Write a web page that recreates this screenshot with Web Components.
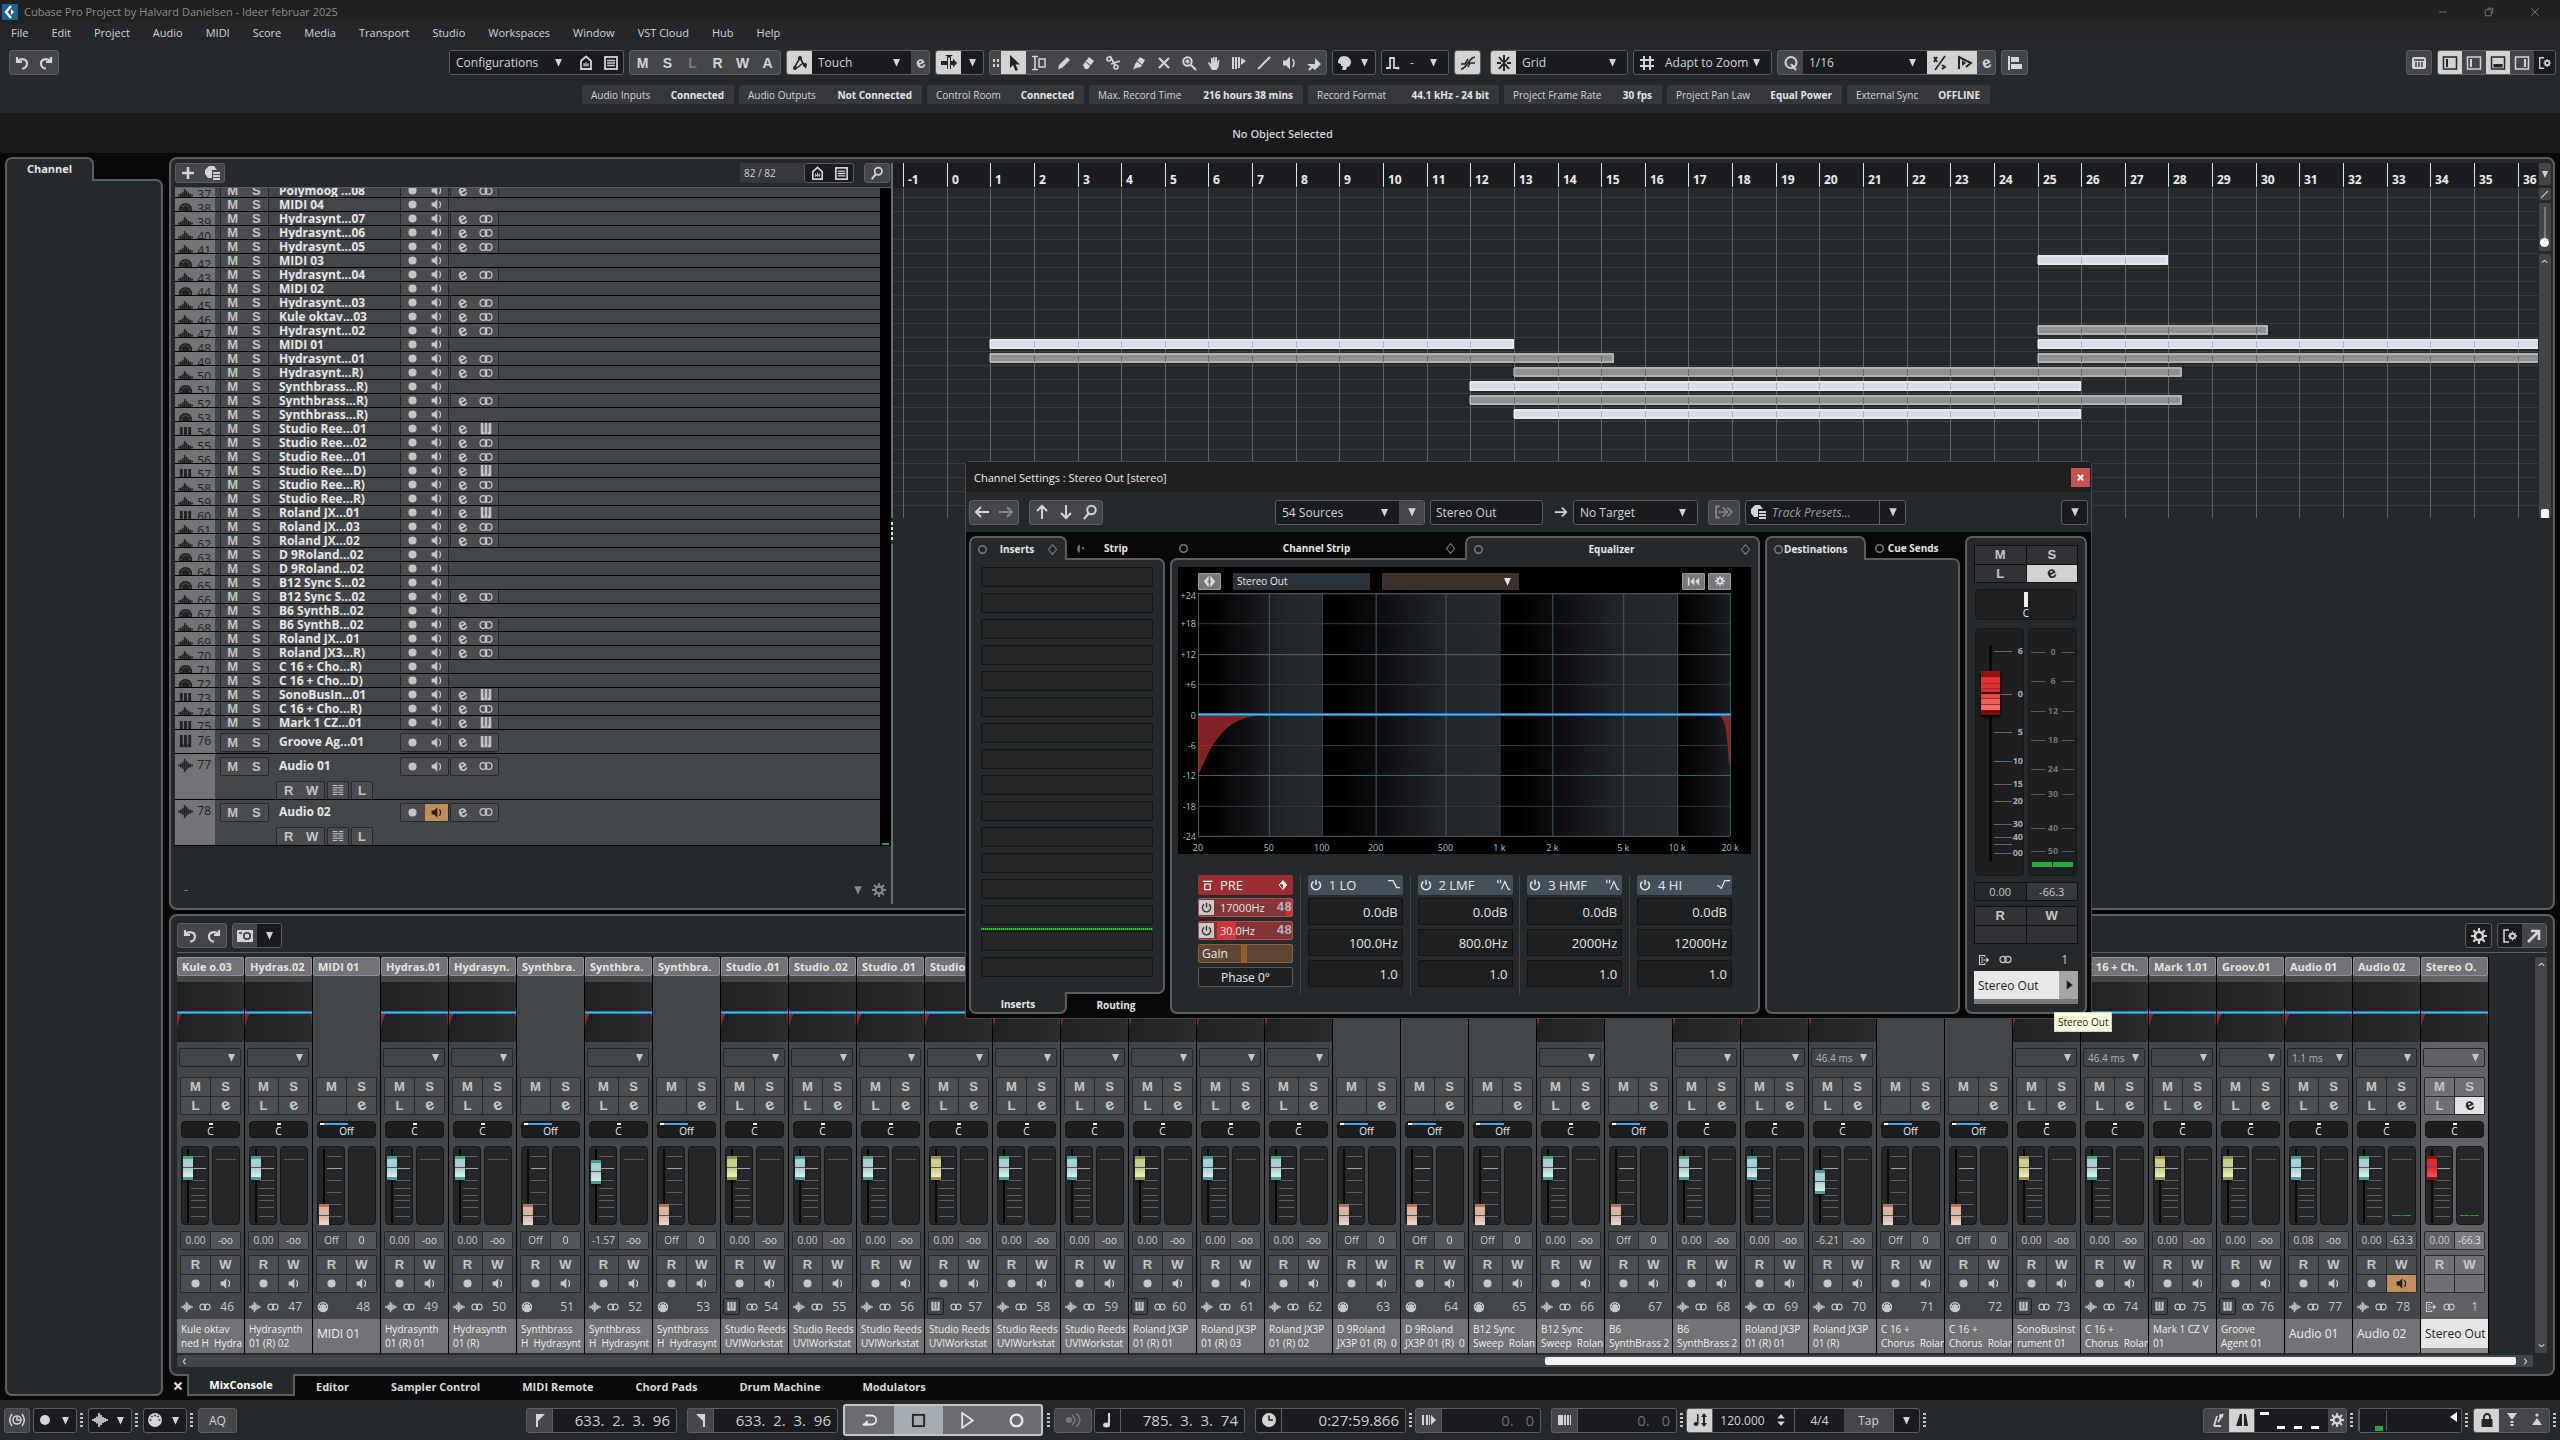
<!DOCTYPE html>
<html lang="en">
<head>
<meta charset="utf-8">
<title>Cubase Pro Project</title>
<style>
  html, body { margin: 0; height: 100%; background: #080808; }
  body { font-family: "Open Sans", "Noto Sans", sans-serif; color: #d2d3d5; overflow: hidden; }
</style>
</head>
<body>
<daw-app></daw-app>

<script>
// ---------- icons, all on a 16 x 16 grid ----------
const S = 'fill="none" stroke="currentColor"';
const ICONS = {
  logo: `<rect width="16" height="16" fill="#17628f"/><path d="M9 2 4 8l5 6" fill="none" stroke="#fff" stroke-width="2.4"/><path d="M9 5l3 3-3 3z" fill="#fff"/>`,
  undo: `<path d="M3 2v5h5M3.500 6.500C6 3 13 3.500 13 8.500c0 3-2.500 5-5 5" ${S} stroke-width="2.200"/>`,
  redo: `<path d="M13 2v5H8M12.500 6.500C10 3 3 3.500 3 8.500c0 3 2.500 5 5 5" ${S} stroke-width="2.200"/>`,
  agent: `<path d="M3 14V6l5-4.500L13 6v8z" ${S} stroke-width="1.800"/><path d="M6 11.500V8M8 11.500V7M10 11.500V8M6 10h4" ${S} stroke-width="1"/>`,
  list: `<rect x="2" y="2" width="12" height="12" ${S} stroke-width="1.800"/><path d="M4 5.500h8M4 8h8M4 10.500h8" ${S} stroke-width="1.400"/>`,
  auto: `<path d="M2 13 8 3l6 10M5 13l6-5" ${S} stroke-width="1.500"/><circle cx="8" cy="3" r="2"/><circle cx="3" cy="13" r="2"/><circle cx="13" cy="10" r="2"/>`,
  autoscroll: `<path d="M0 6h6V2h1v12H6v-4H0zM9 2h1v4h2V3.500L16 8l-4 4.500V10h-2v4H9z"/><path d="M4 0h8L8 3z"/>`,
  dots: `<rect x="5" y="4" width="2" height="3"/><rect x="5" y="9" width="2" height="3"/><rect x="9" y="4" width="2" height="3"/><rect x="9" y="9" width="2" height="3"/>`,
  cursor: `<path d="M4 0v13l3-3 2.500 6 2.500-1-2.500-5.500H14z"/>`,
  range: `<path d="M1 1.500h6M4 1.500v13M1 14.500h6" ${S} stroke-width="1.600"/><rect x="8" y="4" width="6" height="8" ${S} stroke-width="1.500"/>`,
  pencil: `<path d="M2 14l1-4 8-8 3 3-8 8z"/>`,
  eraser: `<path d="M2 10l6-8 5 4-6 8H4z"/><path d="M5 7l5 4" stroke="#37393c"/>`,
  scissors: `<path d="M4 1l5 9M14 6l-9 3" ${S} stroke-width="1.800"/><circle cx="10" cy="12" r="2" ${S} stroke-width="1.600"/><circle cx="3" cy="4" r="2" ${S} stroke-width="1.600"/>`,
  glue: `<path d="M2 15l2-6 5-7 5 3-4 7-5 1z"/><path d="M6 6l5 4" stroke="#37393c"/>`,
  cross: `<path d="M3 3l10 10M13 3L3 13" ${S} stroke-width="2.200"/>`,
  zoom: `<circle cx="6.500" cy="6.500" r="4.200" ${S} stroke-width="2"/><path d="M10 10l5 5M4.500 6.500h4M6.500 4.500v4" ${S} stroke-width="2"/>`,
  search: `<circle cx="9.500" cy="6" r="4.200" ${S} stroke-width="2"/><path d="M6.500 9.500L2 15" ${S} stroke-width="2.200"/>`,
  hand: `<path d="M3 7l2 2V3h1.500v4L7 2h1.500v5L9.500 2H11v6l1-3h1.500l-1 7-2 3H6L2 8z"/>`,
  comp: `<path d="M1 2h2v12H1zM4 2h2v12H4zM7 2h2v11H7zM10 3l5 3-5 4z"/>`,
  line: `<path d="M2 14L14 2" ${S} stroke-width="2"/>`,
  speaker: `<path d="M2 5.500h3l4-4v13l-4-4H2z"/><path d="M11.500 4c2 2 2 6 0 8" ${S} stroke-width="1.500"/>`,
  jog: `<circle cx="4" cy="8" r="3"/><path d="M7 3c4 3 4 7 0 10M11 1c5 4 5 10 0 14" ${S} stroke-width="1.600"/>`,
  warp: `<path d="M1 9h8V3l6 6-6 6"/><path d="M3 15l5-5" ${S} stroke-width="2"/>`,
  head: `<path d="M8 1c4 0 7 3 7 6s-2 5-4 5l-1 3H6l1-4H5V9L2 8c0-4 2-7 6-7z"/>`,
  nudge: `<path d="M1 13h4V3h4v10h4" ${S} stroke-width="1.800"/><circle cx="13" cy="13" r="1.500"/>`,
  xfade: `<path d="M1 14c6 0 8-12 14-12M1 9h4l3-5M8 12l2-4h5" ${S} stroke-width="1.600"/>`,
  snap: `<path d="M8 0v16M1 8h4M11 8h4M3 2l4 5M13 2L9 7M3 14l4-5M13 14L9 9" ${S} stroke-width="2"/>`,
  grid: `<path d="M5 1v14M11 1v14M1 5h14M1 11h14" ${S} stroke-width="2"/>`,
  quant: `<circle cx="8" cy="7.500" r="5.500" ${S} stroke-width="2"/><path d="M8 9l5 6" ${S} stroke-width="2"/>`,
  ratio: `<path d="M13 1L3 15" ${S} stroke-width="1.600"/><path d="M2 2l3 5M5 2L2 7M10 10l3 2-3 2" ${S} stroke-width="1.800"/>`,
  qflag: `<path d="M2 14V2l12 6-5 4" ${S} stroke-width="2"/><path d="M5 5l4 3-4 3z"/>`,
  align: `<path d="M1 1h2v14H1zM4 2h8v5H4zM4 9h11v5H4z"/>`,
  keys: `<path d="M2 1h3v10h1v3H2zM6.500 1h3v13h-3zM11 1h3v13h-4v-3h1z"/>`,
  rack: `<rect x="1" y="2" width="14" height="12" rx="2"/><path d="M3 5h10M5 7v5M8 7v5M11 7v5" stroke="#35373a" stroke-width="1.400"/>`,
  zoneL: `<rect x="1.500" y="2" width="13" height="12" ${S} stroke-width="1.500"/><path d="M4 4h2v8H4z"/>`,
  zoneB: `<rect x="1.500" y="2" width="13" height="12" ${S} stroke-width="1.500"/><path d="M3.500 9h9v3.500h-9z"/>`,
  zoneR: `<rect x="1.500" y="2" width="13" height="12" ${S} stroke-width="1.500"/><path d="M10 4h2v8h-2z"/>`,
  gear: `<circle cx="8" cy="8" r="4" ${S} stroke-width="2.600"/><path d="M8 0v4M8 12v4M0 8h4M12 8h4M2.300 2.300l2.900 2.900M10.800 10.800l2.900 2.900M2.300 13.700l2.900-2.900M10.800 5.200l2.900-2.900" ${S} stroke-width="2.200"/>`,
  zoneGear: `<path d="M7 2H2v12h5" ${S} stroke-width="1.500"/><circle cx="10.500" cy="8" r="2.400" ${S} stroke-width="1.800"/><path d="M10.500 3.500v2M10.500 10.500v2M6 8h2M13 8h2M7.500 5l1 1M12.500 10l1 1M7.500 11l1-1M12.500 6l1-1" ${S} stroke-width="1.400"/>`,
  plus: `<path d="M8 2v12M2 8h12" ${S} stroke-width="2.600"/>`,
  preset: `<path d="M5 1h5l3 4H8v8H4L1 9V5z"/><path d="M9 8h7M9 11h7M9 14h7" ${S} stroke-width="2"/>`,
  dot: `<circle cx="8" cy="8" r="5"/>`,
  ring: `<circle cx="8" cy="8" r="5.500" ${S} stroke-width="2.200"/>`,
  stereo: `<circle cx="5" cy="8" r="3.800" ${S} stroke-width="1.500"/><circle cx="11" cy="8" r="3.800" ${S} stroke-width="1.500"/>`,
  wave: `<path d="M1 7v2M3 6v4M5 4.500v7M7 1v14M9 3v10M11 5v6M13 6v4M15 7v2" ${S} stroke-width="1.700"/>`,
  midi: `<circle cx="8" cy="8" r="7"/><g fill="#4a4c4f"><circle cx="3.500" cy="8" r="1.100"/><circle cx="5" cy="4.500" r="1.100"/><circle cx="8" cy="3.500" r="1.100"/><circle cx="11" cy="4.500" r="1.100"/><circle cx="12.500" cy="8" r="1.100"/></g>`,
  lanes: `<path d="M1 2h6M9 2h6M1 5h14M1 8h6M9 8h6M1 11h14M1 14h6M9 14h6" ${S} stroke-width="1.500"/>`,
  left: `<path d="M15 8H2M7 3L2 8l5 5" ${S} stroke-width="2"/>`,
  right: `<path d="M1 8h13M9 3l5 5-5 5" ${S} stroke-width="2"/>`,
  up: `<path d="M8 15V2M3 7l5-5 5 5" ${S} stroke-width="2"/>`,
  down: `<path d="M8 1v13M3 9l5 5 5-5" ${S} stroke-width="2"/>`,
  goto: `<path d="M4 3H1v10h3M3 8h8M7 4l4 4-4 4M11 4l4 4-4 4" ${S} stroke-width="1.500"/>`,
  out: `<path d="M9 4V2H2v12h7v-2M4 5h3M4 8h8M4 11h3" ${S} stroke-width="1.500"/><path d="M11 4l4 4-4 4z"/>`,
  diamond: `<path d="M8 2l5 6-5 6-5-6z" ${S} stroke-width="1.300"/>`,
  diamondHalf: `<path d="M8 2l5 6-5 6-5-6z" ${S} stroke-width="1.300"/><path d="M8 2l5 6-5 6V8L5 6z"/>`,
  eqlink: `<path d="M7 1v5l-2 2 2 2v5L1 8zM9 1l6 7-6 7V9l2-1-2-1z"/>`,
  rewind: `<path d="M1 3h2v10H1zM9 3v10L4 8zM15 3v10l-5-5z"/>`,
  power: `<path d="M8 1v7M4.500 3.500a6 6 0 1 0 7 0" ${S} stroke-width="2"/>`,
  bypass: `<path d="M1 2h14" ${S} stroke-width="2"/><rect x="4" y="6" width="8" height="8" ${S} stroke-width="1.800"/>`,
  lo: `<path d="M1 3h6l4 8h4" ${S} stroke-width="1.400"/>`,
  mid: `<path d="M1 2v4M4 2v4M5 13l4-9 4 9h2" ${S} stroke-width="1.400"/>`,
  hi: `<path d="M1 9h2l3 3 4-9h6" ${S} stroke-width="1.400"/>`,
  camera: `<rect y="2" width="16" height="12" rx="1"/><circle cx="10" cy="8" r="3.200" fill="none" stroke="#35373a" stroke-width="1.600"/><path d="M2 5h3" stroke="#35373a" stroke-width="1.600"/>`,
  pop: `<path d="M2 14L13 3M5 3h8v9" ${S} stroke-width="2.600"/>`,
  clock: `<circle cx="8" cy="8" r="7"/><path d="M8 3.500V8h4" fill="none" stroke="#1b1c20" stroke-width="1.500"/>`,
  sync: `<circle cx="8" cy="8" r="4" ${S} stroke-width="1.600"/><path d="M8 5v3h3M3 2c-3 4-3 8 0 12M13 2c3 4 3 8 0 12" ${S} stroke-width="1.500"/>`,
  locL: `<path d="M4 2h9L6 9v6H4z"/>`,
  locR: `<path d="M12 2H3l7 7v6h2z"/>`,
  cycle: `<path d="M4 4h5c6 0 6 8 0 8H2" ${S} stroke-width="1.600"/><path d="M1 12.500L6 8v5z"/>`,
  stop: `<rect x="2" y="2" width="12" height="12" ${S} stroke-width="2"/>`,
  play: `<path d="M3 1l10 7-10 7z" ${S} stroke-width="1.600"/>`,
  pre: `<path d="M1 3h2v10H1zM5 3h2v10H5zM8 3h1v10H8zM10 3l5 5-5 5z"/>`,
  punch: `<path d="M1 3h5v10H1zM7 3h2v10H7zM10 3h2v10h-2zM13 3h1v10h-1z"/>`,
  note: `<path d="M8 1h2v11H8z"/><ellipse cx="6.500" cy="13" rx="3.500" ry="2.500"/>`,
  tempo: `<path d="M5 2h1.500v10H5z"/><ellipse cx="4" cy="12" rx="2.500" ry="2"/><path d="M9 5l3-4 3 4h-2v6h2l-3 4-3-4h2V5z"/>`,
  metro: `<path d="M5 14h7M5 14L8 4M9 10l5-8" ${S} stroke-width="1.800"/><circle cx="12" cy="4" r="2"/>`,
  count: `<path d="M2 14L6 2h2v12zM10 2h2l2 12h-4z"/>`,
  lock: `<rect x="2.500" y="7" width="11" height="8"/><path d="M5 8V5a3 3 0 0 1 6 0v3" ${S} stroke-width="1.800"/>`,
  punchIn: `<path d="M3 1h10L8 8z"/><path d="M8 9v6" ${S} stroke-width="3" stroke-dasharray="2 1"/>`,
  punchOut: `<path d="M3 13h10L8 6z"/><circle cx="8" cy="3" r="1.600"/>`,
  min: `<path d="M3 8h10" ${S}/>`, max: `<rect x="3" y="5" width="8" height="8" rx="1" ${S}/><path d="M6 3h7v7" ${S}/>`,
  close: `<path d="M3 3l10 10M13 3L3 13" ${S}/>`,
  xs: `<path d="M4 4l8 8M12 4l-8 8" ${S} stroke-width="2.600"/>`,
  chevL: `<path d="M10 3L6 8l4 5" ${S} stroke-width="2"/>`, chevR: `<path d="M6 3l4 5-4 5" ${S} stroke-width="2"/>`,
  chevU: `<path d="M3 10l5-4 5 4" ${S} stroke-width="2"/>`, chevD: `<path d="M3 6l5 4 5-4" ${S} stroke-width="2"/>`,
  tri: `<path d="M3 3h10L8 14z"/>`, triR: `<path d="M5 2l8 6-8 6z"/>`,
  half: `<path d="M7 2v12C2 13 2 3 7 2zM10 6h3v3h-3z"/>`,
  updown: `<path d="M3 6l5-6 5 6zM3 10l5 6 5-6z"/>`
};

customElements.define('ui-icon', class extends HTMLElement {
  connectedCallback() {
    if (this.shadowRoot) return;
    const s = this.getAttribute('size') || 16;
    this.attachShadow({mode: 'open'}).innerHTML = `
      <style>:host{display:inline-flex;flex:none} svg{display:block;fill:currentColor}</style>
      <svg width="${s}" height="${s}" viewBox="0 0 16 16" aria-hidden="true">${ICONS[this.getAttribute('name')] || ''}</svg>`;
  }
});

const ic = (name, size = 16) => `<ui-icon name="${name}" size="${size}"></ui-icon>`;
const EE = '<span class="e">e</span>';
const b = (inner, cls = '', label = '') => `<button class="${cls}"${label ? ` aria-label="${label}"` : ''}>${inner}</button>`;
const ib = (name, cls = '') => b(ic(name), cls, name);
const sel = (text, w, cls = '') => `<span class="sel ${cls}" style="width:${w}px"><select aria-label="${text || 'choose'}"><option>${text}</option></select>${ic('tri', 11)}</span>`;

const BASE = `
  * { box-sizing: border-box; }
  button, select, input { font: inherit; color: inherit; margin: 0; padding: 0; border: 0; background: none; border-radius: 0; outline: 0; }
  button { display: inline-flex; align-items: center; justify-content: center; }
  select { appearance: none; width: 100%; height: 100%; padding: 0 16px 0 6px; }
  .e { font: bold 16px/16px "Liberation Sans", sans-serif; transform: rotate(-22deg); }
  .g { display: flex; align-items: stretch; height: 25px; flex: none; border: 1px solid #5a5c5f; border-radius: 3px; background: #45464a; overflow: hidden; font-size: 12px; color: #d4d4d4; }
  .g.dk, .dk { background: #1a1b1f; }
  .g button { width: 25px; flex: none; }
  .g.n button { width: 24px; }
  .g .on { background: #d2d2d2; color: #222427; }
  .g .off { color: #75777b; }
  .ltr { font-family: "Liberation Sans", sans-serif; font-weight: bold; font-size: 14px; }
  .sel { display: flex; align-items: center; background: #1a1b1f; padding-right: 6px; }
  .sel ui-icon { margin-left: -14px; pointer-events: none; }
  .grip { flex: none; width: 3px; height: 15px; margin: 0 2px; background: repeating-linear-gradient(#c5c5c5 0 2px, transparent 2px 4px); align-self: center; }
  .sp { flex: 1; }
`;

class DawElement extends HTMLElement {
  connectedCallback() {
    if (this.shadowRoot) return;
    this.attachShadow({mode: 'open'}).innerHTML = `<style>${BASE}${this.css()}</style>${this.html()}`;
  }
  css() { return ':host{display:block}'; }
  html() { return '<slot></slot>'; }
}

// ---------- title, menu ----------
customElements.define('title-bar', class extends DawElement {
  css() { return `
    :host { display: flex; align-items: center; height: 23px; padding: 0 2px; background: #202020; color: #8e8e8e; font-size: 11px; }
    ui-icon { margin-right: 6px; }
    button ui-icon { margin: 0; }
    button { width: 46px; height: 23px; }`; }
  html() { return `${ic('logo')}<span>Cubase Pro Project by Halvard Danielsen - Ideer februar 2025</span><span class="sp"></span>
    ${b(ic('min', 12), '', 'minimize')}${b(ic('max', 12), '', 'restore')}${b(ic('close', 12), '', 'close')}`; }
});

customElements.define('menu-bar', class extends DawElement {
  css() { return `
    :host { display: flex; align-items: center; gap: 23px; height: 19px; padding: 0 11px; background: #24262b; font-size: 11px; }`; }
  html() {
    return 'File,Edit,Project,Audio,MIDI,Score,Media,Transport,Studio,Workspaces,Window,VST Cloud,Hub,Help'
      .split(',').map(t => b(t)).join('');
  }
});

customElements.define('tool-bar', class extends DawElement {
  css() { return `
    :host { display: flex; align-items: center; gap: 5px; height: 40px; padding: 6px 4px 5px 9px; background: #24292c; }
    .cfg { margin-left: 385px; }
    .g .ed { width: 18px; }
    .g .dd { width: 22px; }
    .g.col button { width: 21px; }
    .g.tools .first { width: 11px; }
    .g.zones .last { width: 21px; }`; }
  html() {
    const tools = ['range', 'pencil', 'eraser', 'scissors', 'glue', 'cross', 'zoom', 'hand', 'comp', 'line', 'speaker', 'warp'];
    return `
      <div class="g n">${ib('undo')}${ib('redo')}</div>
      <div class="g dk cfg">${sel('Configurations', 123)}${ib('agent')}${ib('list')}</div>
      <div class="g ltr">${'MS'.split('').map(t => b(t)).join('')}${b('L', 'off')}${'RWA'.split('').map(t => b(t)).join('')}</div>
      <div class="g">${ib('auto', 'on')}${sel('Touch', 99)}${b(EE, 'ed', 'edit')}</div>
      <div class="g dk">${ib('autoscroll', 'on')}${b(ic('tri', 11), 'dd', 'more')}</div>
      <div class="g tools">${b(ic('dots'), 'first', 'handle')}${ib('cursor', 'on')}${tools.map(t => ib(t)).join('')}</div>
      <div class="g dk col">${ib('head')}${b(ic('tri', 11), '', 'colours')}</div>
      <div class="g dk">${b(ic('nudge'), 'dd', 'nudge')}${sel('-', 44)}</div>
      <div class="g">${ib('xfade', 'on')}</div>
      <div class="g dk" style="margin-left:4px">${ib('snap', 'on')}${sel('Grid', 111)}</div>
      <div class="g dk">${ib('grid')}${sel('Adapt to Zoom', 112)}</div>
      <div class="g">${ib('quant')}${sel('1/16', 124)}${ib('ratio', 'on')}${ib('qflag', 'on')}${b(EE, 'ed', 'quantize panel')}</div>
      <div class="g">${ib('align')}</div>
      <span class="sp"></span>
      <div class="g n">${ib('rack')}</div>
      <div class="g n zones">${ib('zoneL', 'on')}${ib('zoneL')}${ib('zoneB', 'on')}${ib('zoneR')}${b(ic('zoneGear', 14), 'dk last', 'zone setup')}</div>`;
  }
});

customElements.define('status-line', class extends DawElement {
  css() { return `
    :host { display: flex; justify-content: center; gap: 5px; height: 31px; padding: 3px 0 9px 12px; background: #24292c; font-size: 10px; }
    div { display: flex; align-items: center; justify-content: space-between; padding: 0 10px 0 9px; background: #37383c; border-radius: 2px; }
    b { color: #e4e4e4; }`; }
  html() {
    return [['Audio Inputs', 'Connected', 152], ['Audio Outputs', 'Not Connected', 183], ['Control Room', 'Connected', 157],
      ['Max. Record Time', '216 hours 38 mins', 214], ['Record Format', '44.1 kHz - 24 bit', 191], ['Project Frame Rate', '30 fps', 158],
      ['Project Pan Law', 'Equal Power', 175], ['External Sync', 'OFFLINE', 143]]
      .map(([k, v, w]) => `<div style="width:${w}px"><span>${k}</span><b>${v}</b></div>`).join('');
  }
});

customElements.define('info-line', class extends DawElement {
  css() { return `:host { display: flex; justify-content: center; align-items: center; height: 40px; padding-left: 5px; background: #191a1c; font-size: 11px; font-weight: 600; }`; }
});

// ---------- frame with tabs on top and, if asked for, below ----------
customElements.define('tab-frame', class extends DawElement {
  css() { return `
    :host { display: flex; flex-direction: column; min-width: 0; min-height: 0; font-size: 10px; font-weight: bold; color: #e6e6e6; }
    .tabs { display: flex; height: 22px; flex: none; }
    .tab { flex: 1; display: flex; align-items: center; justify-content: space-between; padding: 2px 8px 0; }
    :host([single]) .tab { flex: 0 0 89px; justify-content: center; font-size: 11px; }
    .tab ui-icon { color: #77797c; }
    .tab .pad { width: 11px; }
    .tab.on { position: relative; z-index: 1; background: #24292c; border: 2px solid #5b5d61; padding: 0 6px; }
    :host([single]) .tab.on { padding-bottom: 3px; }
    .top .on { border-bottom: 0; border-radius: 7px 7px 0 0; margin-bottom: -2px; }
    .bot { height: 20px; }
    .bot .tab { justify-content: center; }
    .bot .on { border-top: 0; border-radius: 0 0 7px 7px; margin-top: -2px; padding-top: 3px; }
    .body { flex: 1; min-height: 0; border: 2px solid #5b5d61; border-radius: 7px; background: #24292c; font-weight: normal; }
    .a0 { border-top-left-radius: 0; }
    .a1 { border-top-right-radius: 0; }
    .b0 { border-bottom-left-radius: 0; }`; }
  html() {
    const active = +(this.getAttribute('active') || 0);
    const icons = (this.getAttribute('icons') || '').split(',');
    const tab = (t, i, on) => {
      const [l, r] = (icons[i] || '').split(' ');
      return `<button class="tab ${on ? 'on' : ''}">${l ? ic(l, 11) : ''}<span>${t}</span>${r ? ic(r, 13) : l ? '<span class="pad"></span>' : ''}</button>`;
    };
    const bot = this.getAttribute('bottom');
    return `<div class="tabs top">${this.getAttribute('tabs').split(',').map((t, i) => tab(t, i, i === active)).join('')}</div>
      <div class="body a${active} ${bot ? 'b0' : ''}"><slot></slot></div>
      ${bot ? `<div class="tabs bot">${bot.split(',').map((t, i) => `<button class="tab ${i ? '' : 'on'}">${t}</button>`).join('')}</div>` : ''}`;
  }
});

// ---------- track list ----------
// number, kind (a audio, m midi, i instrument), name
const TRACKS = [[37, 'a', 'Polymoog ...08'], [38, 'm', 'MIDI 04'], [39, 'a', 'Hydrasynt...07'], [40, 'a', 'Hydrasynt...06'], [41, 'a', 'Hydrasynt...05'],
  [42, 'm', 'MIDI 03'], [43, 'a', 'Hydrasynt...04'], [44, 'm', 'MIDI 02'], [45, 'a', 'Hydrasynt...03'], [46, 'a', 'Kule oktav...03'],
  [47, 'a', 'Hydrasynt...02'], [48, 'm', 'MIDI 01'], [49, 'a', 'Hydrasynt...01'], [50, 'a', 'Hydrasynt...R)'], [51, 'm', 'Synthbrass...R)'],
  [52, 'a', 'Synthbrass...R)'], [53, 'm', 'Synthbrass...R)'], [54, 'i', 'Studio Ree...01'], [55, 'a', 'Studio Ree...02'], [56, 'a', 'Studio Ree...01'],
  [57, 'i', 'Studio Ree...D)'], [58, 'a', 'Studio Ree...R)'], [59, 'a', 'Studio Ree...R)'], [60, 'i', 'Roland JX...01'], [61, 'a', 'Roland JX...03'],
  [62, 'a', 'Roland JX...02'], [63, 'm', 'D 9Roland...02'], [64, 'm', 'D 9Roland...02'], [65, 'm', 'B12 Sync S...02'], [66, 'a', 'B12 Sync S...02'],
  [67, 'm', 'B6 SynthB...02'], [68, 'a', 'B6 SynthB...02'], [69, 'a', 'Roland JX...01'], [70, 'a', 'Roland JX3...R)'], [71, 'm', 'C 16 + Cho...R)'],
  [72, 'm', 'C 16 + Cho...D)'], [73, 'i', 'SonoBusIn...01'], [74, 'a', 'C 16 + Cho...R)'], [75, 'i', 'Mark 1 CZ...01'], [76, 'i', 'Groove Ag...01', 'mid'],
  [77, 'a', 'Audio 01', 'tall'], [78, 'a', 'Audio 02', 'tall', 'mon']];
const KIND = {a: 'wave', m: 'midi', i: 'keys'};

customElements.define('track-row', class extends DawElement {
  css() { return `
    :host { display: flex; height: 14px; border-bottom: 1px solid #000; background: #434649; overflow: hidden; }
    :host([size=mid]) { height: 24px; }
    :host([size=tall]) { height: 46px; }
    .num { width: 40px; height: 100%; flex: none; background: #727376; color: #222; font-size: 12px; line-height: 22px; display: flex; align-items: flex-start; padding: 0 4px 0 3px; justify-content: space-between; }
    .num ui-icon { margin-top: 4px; }
    .main { padding-left: 5px; }
    .line { display: flex; height: 13px; align-items: center; }
    :host([size]) .line { height: 24px; }
    .c { display: flex; width: 49px; height: 100%; border: solid #26282b; border-width: 0 1px; background: #4a4c50; color: #c4c4c4; }
    :host([size]) .c { height: 19px; border-width: 1px; border-radius: 2px; }
    .c button { flex: 1; }
    .c .mon { background: #bf8f5d; color: #222; }
    .name { width: 131px; padding-left: 10px; font: bold 12px/16px "Open Sans", "Noto Sans", sans-serif; color: #e6e6e6; white-space: nowrap; }
    .c + .c { margin-left: 1px; }
    .ltr { font-size: 13px; }
    .line.sub { padding-left: 56px; height: 17px; gap: 2px; }
    .sub .c { height: 19px; margin: 0; }
    .sub .s { width: 22px; }`; }
  html() {
    const [n, kind, name, size, mon] = TRACKS[this.getAttribute('index')];
    return `<div class="num">${ic(KIND[kind], 15)}<span>${n}</span></div>
      <div class="main"><div class="line">
        <div class="c ltr">${b('M')}${b('S')}</div><span class="name">${name}</span>
        <div class="c">${b(ic('dot', 13), '', 'record')}${b(ic('speaker', 13), mon ? 'mon' : '', 'monitor')}</div>
        ${kind === 'm' ? '' : `<div class="c">${b(EE, '', 'edit')}${b(ic(kind === 'i' ? 'keys' : 'stereo', 14), '', 'channel')}</div>`}
      </div>
      ${size === 'tall' ? `<div class="line sub"><div class="c ltr">${b('R')}${b('W')}</div><div class="c s">${b(ic('lanes', 12), '', 'lanes')}</div><div class="c s ltr">${b('L')}</div></div>` : ''}</div>`;
  }
});

customElements.define('track-list', class extends DawElement {
  css() { return `
    :host { display: flex; flex-direction: column; }
    header { display: flex; height: 25px; flex: none; align-items: flex-start; border-bottom: 1px solid #5b5d61; }
    .g { height: 20px; }
    .count { width: 64px; height: 20px; padding-left: 4px; background: #37383c; font-size: 10px; line-height: 20px; }
    .find { margin: 0 1px 0 10px; }
    .rows { overflow: hidden; border-right: 11px solid #000; }
    .rows track-row:first-child { margin-top: -4px; }
    .meter { height: 2px; width: 7px; margin: -3px 2px 0 auto; background: #2a9a40; }
    footer { display: flex; align-items: center; gap: 8px; padding: 0 5px 6px 9px; margin-top: auto; font-size: 12px; color: #85878a; }`; }
  html() {
    return `<header><div class="g n">${ib('plus')}${ib('preset')}</div><span class="sp"></span>
        <span class="count">82 / 82</span><div class="g n dk">${b(ic('agent', 15), '', 'agents')}${b(ic('list', 15), '', 'visibility')}</div><div class="g n find">${b(ic('search', 14), '', 'search')}</div></header>
      <div class="rows">${TRACKS.map((t, i) => `<track-row index="${i}"${t[3] ? ` size="${t[3]}"` : ''}></track-row>`).join('')}</div>
      <div class="meter"></div>
      <footer><span>-</span><span class="sp"></span>${ic('tri', 12)}${ic('gear', 14)}</footer>`;
  }
});

// ---------- arrangement: bar lines, lanes and parts ----------
// track, first bar, last bar, 1 = midi part
const PARTS = [[42, 25, 28, 1], [47, 25, 30.27], [48, 1, 13, 1], [48, 25, 40, 1], [49, 1, 15.3], [49, 25, 40],
  [50, 13, 28.3], [51, 12, 26, 1], [52, 12, 28.3], [53, 13, 26, 1]];
const barX = bar => Math.round(10 + (bar + 1) * 480 / 11);

customElements.define('arrange-view', class extends DawElement {
  css() { return `
    :host { display: grid; grid-template-columns: 1fr 13px; min-width: 0; }
    svg { display: block; width: 100%; }
    .ruler { height: 25px; background: #1b1c20; }
    .lanes { height: 330px; }
    text { font: bold 12px "Open Sans", "Noto Sans", sans-serif; fill: #eceded; }
    .side { display: flex; flex-direction: column; align-items: center; gap: 3px; }
    .side > * { width: 12px; background: #434549; border-radius: 2px; }
    .side .t { height: 22px; }
    .side .p { height: 12px; }
    .zoom { height: 48px; padding: 4px 0; display: flex; justify-content: center; }
    .zoom input { appearance: none; writing-mode: vertical-lr; width: 9px; height: 40px; background: linear-gradient(90deg, transparent 4px, #77797c 4px 6px, transparent 6px); }
    .zoom input::-webkit-slider-thumb { appearance: none; width: 9px; height: 9px; border-radius: 5px; background: #fff; }
    .bar { height: 264px; display: flex; flex-direction: column; justify-content: space-between; align-items: center; padding-top: 3px; }
    .bar i { width: 8px; height: 9px; background: #f4f4f4; border-radius: 2px 2px 0 0; }`; }
  html() {
    let ticks = '', bars = '', lanes = '', parts = '';
    for (let i = -1; i < 37; i++) {
      ticks += `<rect x="${barX(i)}" width="1" height="24" fill="#e4e4e4"/><text x="${barX(i) + 5}" y="21">${i}</text>`;
      bars += `<rect x="${barX(i)}" width="1" height="330" fill="#5f6265"/>`;
    }
    for (let y = 9; y < 330; y += 14) lanes += `<rect y="${y}" width="100%" height="1" fill="#383b3e"/>`;
    for (const [trk, from, to, midi] of PARTS) {
      const x = barX(from), y = 12 + (trk - 38) * 14, w = barX(to) - x;
      parts += `<rect x="${x}" y="${y - 1}" width="${w}" height="10" fill="${midi ? '#d8dde5' : '#8f9092'}"/>
        <path d="M${x} ${y}h${w - 1}v8h${1 - w}z" fill="none" stroke="${midi ? '#f4f5f7' : '#d4d4d4'}"/>`;
      for (let k = from + 1; k < to; k++) parts += `<rect x="${barX(k)}" y="${y + 1}" width="1" height="7" fill="${midi ? '#a9b8c4' : '#6c6d6f'}"/>`;
    }
    return `<div><svg class="ruler">${ticks}</svg><svg class="lanes">${lanes}${bars}${parts}</svg></div>
      <div class="side">${b(ic('tri', 10), 't', 'ruler setup')}${b(ic('line', 9), 'p', 'draw')}
        <div class="zoom"><input type="range" value="100" aria-label="Waveform zoom"></div>
        <div class="bar">${ic('chevU', 9)}<i></i></div></div>`;
  }
});

// ---------- mixer ----------
// label, number, kind, name lines, options
const SR = ['Studio Reeds', 'UVIWorkstat'], SY = ['Synthbrass', 'H&nbsp; Hydrasynt'];
const STRIPS = [['Kule o.03', 46, 'a', ['Kule oktav', 'ned H&nbsp; Hydra']], ['Hydras.02', 47, 'a', ['Hydrasynth', '01 (R) 02']], ['MIDI 01', 48, 'm', ['MIDI 01']],
  ['Hydras.01', 49, 'a', ['Hydrasynth', '01 (R) 01']], ['Hydrasyn.', 50, 'a', ['Hydrasynth', '01 (R)']], ['Synthbra.', 51, 'm', SY],
  ['Synthbra.', 52, 'a', SY, {v: '-1.57', f: 79}], ['Synthbra.', 53, 'm', SY], ['Studio .01', 54, 'i', SR], ['Studio .02', 55, 'a', SR],
  ['Studio .01', 56, 'a', SR], ['Studio .', 57, 'i', SR], ['', 58, 'a', SR], ['', 59, 'a', SR], ['', 60, 'i', ['Roland JX3P', '01 (R) 01']],
  ['', 61, 'a', ['Roland JX3P', '01 (R) 03']], ['', 62, 'a', ['Roland JX3P', '01 (R) 02']], ['', 63, 'm', ['D 9Roland', 'JX3P 01 (R)&nbsp; 0']],
  ['', 64, 'm', ['D 9Roland', 'JX3P 01 (R)&nbsp; 0']], ['', 65, 'm', ['B12 Sync', 'Sweep&nbsp; Rolan']], ['', 66, 'a', ['B12 Sync', 'Sweep&nbsp; Rolan']],
  ['', 67, 'm', ['B6', 'SynthBrass 2']], ['', 68, 'a', ['B6', 'SynthBrass 2']], ['', 69, 'a', ['Roland JX3P', '01 (R) 01']],
  ['', 70, 'a', ['Roland JX3P', '01 (R)'], {v: '-6.21', f: 61, ms: '46.4 ms'}], ['', 71, 'm', ['C 16 +', 'Chorus&nbsp; Rolan']], ['', 72, 'm', ['C 16 +', 'Chorus&nbsp; Rolan']],
  ['', 73, 'i', ['SonoBusInst', 'rument 01']], ['C 16 + Ch.', 74, 'a', ['C 16 +', 'Chorus&nbsp; Rolan'], {ms: '46.4 ms'}], ['Mark 1.01', 75, 'i', ['Mark 1 CZ V', '01']],
  ['Groov.01', 76, 'i', ['Groove', 'Agent 01']], ['Audio 01', 77, 'a', ['Audio 01'], {v: '0.08', ms: '1.1 ms'}],
  ['Audio 02', 78, 'a', ['Audio 02'], {m: '-63.3', mon: 1, noCut: 1}], ['Stereo O.', 1, 'o', ['Stereo Out'], {m: '-66.3'}]];

const CAP = {a: ['#4f9a99', '#a9d0d1', '#dcefee'], i: ['#96954a', '#cfce8e', '#ecebc4'], m: ['#a9745a', '#dcb49f', '#eedccf'], o: ['#8c1214', '#d92b2e', '#ea5a5c']};

customElements.define('mix-strip', class extends DawElement {
  css() {
    const kind = STRIPS[this.getAttribute('index')][2];
    const [edge, mid, lite] = CAP[kind];
    return `
    :host { --bg: #434649; --cell: #4b4e51; display: flex; flex-direction: column; flex: none; width: 68px; border-right: 1px solid #000; background: var(--bg); color: #c6c7c8; overflow: hidden; }
    :host([out]) { --bg: #616265; --cell: #707176; }
    .label { height: 19px; border: 1px solid #909194; border-radius: 2px; background: #727376; padding-left: 4px; font: bold 11px/17px "Open Sans", "Noto Sans", sans-serif; color: #e4e4e4; white-space: nowrap; overflow: hidden; }
    .eq { height: 60px; margin: 6px 0; }
    .eq svg { display: block; width: 100%; height: 100%; background: linear-gradient(90deg, #1f2021, #292b2c); }
    .ins { height: 19px; margin: 0 3px 0 2px; border: 1px solid #222426; border-radius: 2px; font-size: 10px; }
    .ins.sel { background: none; padding-right: 0; }
    .ins.sel select { padding-left: 4px; color: #b4b5b6; }
    .gap { height: 19px; }
    .grid { display: grid; grid-template: 1fr 1fr / 1fr 1fr; gap: 1px; height: 38px; margin: 10px 3px 6px; border: 1px solid #26282a; border-radius: 2px; background: #26282a; }
    .grid button { background: var(--cell); }
    .ltr { font-size: 13px; }
    .grid .hot { background: #e2e2e2; color: #222; }
    .grid .mon { background: #bf8f5d; color: #222; }
    .pan { position: relative; height: 17px; margin: 0 4px; border: 1px solid #141515; border-radius: 4px; background: #1c1d1f; font-size: 10px; line-height: 18px; text-align: center; color: #eee; }
    .pan::before { content: ""; position: absolute; left: 27px; top: 1px; width: 4px; height: 2px; background: #fff; }
    .pan.off::before { left: 2px; width: 28px; background: linear-gradient(90deg, #fff 4px, #4aa3e8 4px); }
    .fad { display: flex; justify-content: space-between; height: 79px; margin: 8px 4px 6px; overflow: hidden; }
    .fad > div { display: grid; width: 28px; height: 79px; border: 1px solid #17181a; border-radius: 4px; background: #242628; }
    .fad svg, .fad input { grid-area: 1 / 1; }
    .fad input { appearance: none; writing-mode: vertical-lr; direction: rtl; width: 10px; height: 80px; margin: 1px 0 0 1px; }
    .fad input::-webkit-slider-thumb { appearance: none; width: 10px; height: 24px; background: linear-gradient(${edge} 3px, ${mid} 3px 11px, #555 11px 12px, ${mid} 12px, ${lite} 21px, ${edge} 21px); }
    .fad input::-webkit-slider-thumb { box-shadow: 0 2px 2px #0008; }
    .vals { display: flex; height: 19px; margin: 0 3px 5px; border: 1px solid #26282a; border-radius: 2px; font-size: 10px; line-height: 17px; text-align: center; }
    .vals span { flex: 1 1 0; width: 0; }
    .vals span + span { background: var(--cell); border-left: 1px solid #26282a; filter: brightness(1.1); }
    .grid.low { margin: 0 3px; }
    .id { display: flex; align-items: center; gap: 6px; height: 26px; padding: 1px 10px 0 4px; font-size: 12px; }
    .id span { margin-left: auto; }
    .id .box { display: flex; border: 1px solid #1d1e20; border-radius: 2px; padding: 2px; margin-left: -2px; }
    .nm { height: 34px; padding: 3px 0 3px 4px; background: #727376; font-size: 10px; line-height: 14px; color: #f0f0f0; white-space: nowrap; overflow: hidden; }
    .nm.one { font-size: 12px; line-height: 24px; }
    :host([out]) .nm { background: #e6e6e6; color: #1c1c1c; border-bottom: 5px solid #8b8c8e; }`;
  }
  html() {
    const [label, n, kind, name, o = {}] = STRIPS[this.getAttribute('index')];
    const midi = kind === 'm', out = kind === 'o';
    const ticks = midi ? [9, 33, 45, 57, 69] : [9, 33, 41, 48, 53, 60, 69];
    const cut = o.noCut ? '' : '<path d="M0 31h7C3 32 2 37 0 46zM67 31h-1l1 14z" fill="#8e2a2c"/>';
    return `
      <div class="label">${label}</div>
      <div class="eq">${midi ? '' : `<svg>${cut}<rect y="29" width="100%" height="3" fill="#2f7db5"/><rect y="30" width="100%" height="1" fill="#49b0f0"/></svg>`}</div>
      ${midi ? '<div class="gap"></div>' : sel(o.ms || '', 62, 'ins')}
      <div class="grid ltr">${b('M')}${b('S')}${b(midi ? '' : 'L', '', midi ? 'none' : '')}${b(EE, out ? 'hot' : '', 'edit')}</div>
      <div class="pan ${midi ? 'off' : ''}">${midi ? 'Off' : 'C'}</div>
      <div class="fad"><div><svg width="26" height="77"><rect x="5" y="2" width="2" height="74" fill="#08090a"/>
          ${ticks.map(y => `<rect x="9" y="${y}" width="15" height="1" fill="#5c5f62"/>`).join('')}<rect x="9" y="21" width="15" height="1" fill="#9aa4ab"/></svg>
          <input type="range" value="${midi ? 0 : o.f || 86}" aria-label="Volume ${n}"></div>
        <div><svg width="26" height="77">${midi ? '' : '<rect x="3" y="12" width="20" height="1" fill="#55585b"/>'}${o.m ? '<path d="M3 68h9v1H3zM13 68h9v1h-9z" fill="#2a9a40"/>' : ''}</svg></div></div>
      <div class="vals"><span>${midi ? 'Off' : o.v || '0.00'}</span><span>${midi ? '0' : o.m || '-oo'}</span></div>
      <div class="grid low ltr">${b('R')}${b('W')}${out ? b('', '', 'none') + b('', '', 'none') : b(ic('dot', 13), '', 'record') + b(ic('speaker', 13), o.mon ? 'mon' : '', 'monitor')}</div>
      <div class="id">${kind === 'i' ? `<div class="box">${ic('keys', 11)}</div>` : ic(out ? 'out' : KIND[kind], 12)}${midi ? '' : ic('stereo', 12)}<span>${n}</span></div>
      <div class="nm ${name.length < 2 ? 'one' : ''}">${name.join('<br>')}</div>`;
  }
});

customElements.define('mix-console', class extends DawElement {
  css() { return `
    :host { display: block; border: 2px solid #5b5d61; border-radius: 8px; background: #24292c; padding: 7px 6px 7px; }
    header { display: flex; gap: 5px; height: 30px; border-bottom: 1px solid #5b5d61; }
    main { display: grid; grid-template-columns: 1fr 12px; margin-top: 4px; }
    .strips { display: flex; min-width: 0; overflow: hidden; }
    .v, .h { background: #434549; display: flex; justify-content: space-between; align-items: center; border-radius: 2px; }
    .v { flex-direction: column; padding: 3px 0; }
    .h { height: 12px; margin: 2px 14px 0 0; padding: 0 3px; }
    .h i { flex: 971; height: 8px; margin-right: 5px; background: #f2f2f2; border-radius: 2px; }
    .h span { flex: 1355; }
    .pop { display: flex; background: #45464a; }`; }
  html() {
    return `<header><div class="g n">${ib('undo')}${ib('redo')}</div><div class="g n">${ib('camera')}${b(ic('tri', 11), 'dk', 'snapshots')}</div><span class="sp"></span>
        <div class="g dk">${ib('gear')}</div><div class="g n dk">${ib('zoneGear')}<span class="pop">${ib('pop')}</span></div></header>
      <main><div class="strips">${STRIPS.map((s, i) => `<mix-strip index="${i}"${s[2] === 'o' ? ' out' : ''}></mix-strip>`).join('')}</div>
        <div class="v">${ic('chevU', 9)}${ic('chevD', 9)}</div></main>
      <div class="h">${ic('chevL', 9)}<span></span><i></i>${ic('chevR', 9)}</div>`;
  }
});

customElements.define('lower-tabs', class extends DawElement {
  css() { return `
    :host { display: flex; align-items: center; height: 20px; font-size: 11px; font-weight: bold; gap: 42px; color: #dcdcdc; }
    .x { width: 18px; margin-right: -42px; height: 20px; }
    .on { position: relative; width: 108px; height: 22px; margin: -2px -21px 0 0; background: #24292c; border: 2px solid #5b5d61; border-top: 0; color: #fff; }`; }
  html() {
    return b(ic('xs', 14), 'x', 'close zone') + b('MixConsole', 'on')
      + 'Editor,Sampler Control,MIDI Remote,Chord Pads,Drum Machine,Modulators'.split(',').map(t => b(t)).join('');
  }
});

// ---------- transport ----------
customElements.define('transport-bar', class extends DawElement {
  css() { return `
    :host { display: flex; align-items: center; gap: 10px; height: 40px; padding: 0 4px; background: #24292c; }
    .set { display: flex; gap: 1px; align-items: center; }
    .set .g { font-size: 12px; }
    .tight { margin-right: -7px; }
    .tight .g button { width: 21px; }
    .t { display: flex; justify-content: flex-end; align-items: center; width: 124px; padding-right: 6px; background: #1a1b1f; border-left: 1px solid #5a5c5f; font-size: 15px; white-space: pre; color: #cfd0d0; }
    .t.s { width: 99px; color: #6b6d70; }
    .play { display: flex; width: 200px; height: 32px; border: 2px solid #c4c5c6; border-radius: 3px; background: #6b6c70; margin: 0 0 0 -5px; }
    .play button { flex: 1; color: #e8e8e8; }
    .play .st { background: #a6adb2; color: #26282a; }
    .mt { display: flex; align-items: center; justify-content: center; background: #1a1b1f; border-left: 1px solid #5a5c5f; }
    .jog { width: 38px; justify-content: center; color: #75777b; }`; }
  html() {
    const two = n => `<div class="set tight"><div class="g dk">${b(ic(n), '', n)}${b(ic('tri', 11), '', n + ' mode')}</div><i class="grip"></i></div>`;
    return `
      <div class="g tight n">${ib('sync')}</div>${two('dot')}${two('wave')}${two('midi')}
      <div class="g"><button style="width:37px">AQ</button></div>
      <div class="g" style="margin-left:279px">${ib('locL')}<span class="t">633.  2.  3.  96</span></div>
      <div class="g">${ib('locR')}<span class="t">633.  2.  3.  96</span></div>
      <div class="set" style="gap:2px"><div class="play">${b(ic('cycle', 18), '', 'cycle')}${b(ic('stop', 15), 'st', 'stop')}${b(ic('play', 17), '', 'play')}${b(ic('ring', 17), '', 'record')}</div><i class="grip"></i>
        <div class="g jog">${b(ic('jog'), '', 'jog')}</div>
        <div class="g dk">${ib('note')}<span class="t">785.  3.  3.  74</span></div></div>
      <div class="set tight"><div class="g dk" style="--w:25px"><span style="display:flex;padding:0 2px">${ib('clock')}</span><span class="t">0:27:59.866</span></div><i class="grip"></i></div>
      <div class="g" style="margin-left:-2px">${ib('pre')}<span class="t s">0.   0</span></div>
      <div class="set tight"><div class="g"><span style="display:flex;padding:0 2px">${ib('punch')}</span><span class="t s">0.   0</span></div><i class="grip"></i></div>
      <div class="set" style="margin-left:-2px"><div class="g">${ib('tempo', 'on')}<span class="mt" style="width:82px;gap:10px">120.000 ${ic('updown', 12)}</span><span class="mt" style="width:50px">4/4</span>
        <button style="width:49px">Tap</button><span class="mt">${b(ic('tri', 11), '', 'tempo menu')}</span></div><i class="grip"></i></div>
      <span class="sp"></span>
      <div class="set"><div class="g">${ib('metro')}${ib('count', 'on')}<span class="mt" style="width:74px"><svg width="70" height="23"><path d="M3 3h9v3H3zM20 17h8v3h-8zM37 17h8v3h-8zM54 17h8v3h-8z" fill="#fff"/></svg></span>
        <button style="width:18px" aria-label="metronome setup">${ic('gear', 14)}</button></div><i class="grip"></i></div>
      <div class="set" style="margin-left:-7px"><div class="g"><span class="mt" style="width:102px"><svg width="100" height="23"><path d="M14 17h8v5h-8z" fill="#23a83f"/><path d="M25 2h1v20h-1z" fill="#55575a"/><path d="M96 3v10l-7-5z" fill="#fff"/></svg></span></div><i class="grip"></i></div>
      <div class="set" style="margin-left:-7px"><div class="g">${ib('lock', 'on')}${ib('punchIn')}${ib('punchOut')}</div><i class="grip" style="margin-right:0"></i></div>`;
  }
});

// ---------- channel settings window ----------
customElements.define('eq-curve', class extends DawElement {
  css() { return `
    :host { display: block; background: #000; height: 287px; }
    header { display: flex; align-items: center; height: 25px; padding: 3px 20px 0; }
    header button { width: 23px; height: 17px; background: #77787b; border: 1px solid #98999b; margin-left: 3px; border-radius: 1px; color: #ddd; }
    header button:first-child { margin: 0 12px 0 0; }
    input { width: 137px; height: 17px; padding-left: 4px; background: #2b323a; font-size: 10px; margin-right: 12px; }
    .sel { height: 17px; background: #3b302b; padding-right: 3px; }
    svg { display: block; width: 100%; }
    text { font-size: 9px; fill: #9dc0cb; }`; }
  html() {
    const x = f => Math.round(20 + 533 / 3 * Math.log10(f / 20));
    let s = '';
    for (const [a, z] of [[20, 100], [100, 1000], [1000, 10000], [10000, 20000]])
      s += `<rect x="${x(a)}" y="1" width="${x(z) - x(a)}" height="243" fill="url(#${a === 10000 ? 'gs' : 'g'})"/>`;
    for (let i = 0; i < 9; i++) {
      const db = 24 - i * 6, y = 1 + Math.round(i * 243 / 8);
      s += `<rect x="20" y="${y}" width="533" height="1" fill="${i % 2 ? '#33393c' : '#546468'}"/><text x="18" y="${y + (i ? 4 : 6)}" text-anchor="end">${db > 0 ? '+' + db : db}</text>`;
    }
    for (const [f, t] of [[20, '20'], [50, '50'], [100, '100'], [200, '200'], [500, '500'], [1000, '1 k'], [2000, '2 k'], [5000, '5 k'], [10000, '10 k'], [20000, '20 k']])
      s += `<rect x="${x(f)}" y="1" width="1" height="243" fill="#46585e"/><text x="${x(f)}" y="259" text-anchor="middle">${t}</text>`;
    return `<header>${b(ic('eqlink', 13), '', 'channel link')}<input value="Stereo Out" aria-label="Channel name">${sel('', 137)}<span class="sp"></span>${b(ic('rewind', 13), '', 'reset')}${b(ic('gear', 10), '', 'eq setup')}</header>
      <svg viewBox="0 0 574 262" height="262"><defs><linearGradient id="g"><stop offset=".1" stop-color="#000"/><stop offset=".7" stop-color="#22252a"/><stop offset="1" stop-color="#262a2f"/></linearGradient>
        <linearGradient id="gs"><stop offset=".1" stop-color="#000"/><stop offset="1" stop-color="#1b1e21"/></linearGradient></defs>${s}
        <path d="M20 123H92C60 124 42 130 20 184zM540 123C549 125 550 140 552 172h1v-49z" fill="#a02b2d" fill-opacity=".8"/>
        <rect x="20" y="121" width="534" height="3" fill="#2378b4"/><rect x="20" y="122" width="534" height="1" fill="#55b7f5"/></svg>`;
  }
});

customElements.define('eq-bands', class extends DawElement {
  css() { return `
    :host { display: flex; justify-content: space-between; padding: 0 19px 0 20px; margin-top: 21px; }
    .band { display: flex; flex-direction: column; width: 95px; font-size: 13px; gap: 4px; }
    .sepr { width: 1px; height: 120px; background: #42464a; }
    .hd { display: flex; align-items: center; height: 20px; margin-bottom: -1px; padding: 0 2px; gap: 7px; background: #46505a; border-radius: 2px; }
    .hd span { flex: 1; }
    .band input { width: 100%; height: 27px; border: 1px solid #111213; border-radius: 2px; background: #1e1f21; text-align: right; padding-right: 4px; }
    .pre { gap: 4px; }
    .pre > * { height: 19px; border-radius: 2px; }
    .pre .hd { background: #9a2e30; height: 20px; color: #eee; padding: 0 4px; }
    .cut { display: flex; align-items: center; border: 1px solid #b05050; background: #843437; font-size: 11px; }
    .cut button { width: 15px; height: 15px; background: #d0c8c8; color: #333; }
    .cut input { flex: 1; width: 0; height: 17px; border: 0; border-radius: 0; text-align: left; padding: 0 0 0 6px; background: none; }
    .cut i { font: 13px/16px "Liberation Mono", monospace; font-weight: bold; color: #a9b4c4; }
    .cut.r i { background: linear-gradient(90deg, transparent 10px, #c83235 10px); }
    .cut.l input { background: linear-gradient(90deg, transparent 3px, #d23438 3px 22px, transparent 22px); }
    .gain { border: 1px solid #8a623f; background: linear-gradient(90deg, #5f4533 42px, #9c5d2c 42px 48px, #5f4533 48px); font-size: 12px; line-height: 17px; padding-left: 3px; }
    .phase { border: 1px solid #56585b; height: 20px; font-size: 12px; color: #eee; background: #1e2022; }`; }
  html() {
    const band = (t, i, f) => `<div class="sepr"></div><div class="band"><div class="hd">${b(ic('power', 12), '', 'power')}<span>${t}</span>${ic(i, 14)}</div>
      <input value="0.0dB" aria-label="${t} gain"><input value="${f}" aria-label="${t} frequency"><input value="1.0" aria-label="${t} Q"></div>`;
    return `<div class="band pre"><div class="hd">${ic('bypass', 11)}<span>PRE</span>${ic('diamondHalf', 12)}</div>
        <div class="cut r">${b(ic('power', 11), '', 'high cut')}<input value="17000Hz" aria-label="High cut"><i>48</i></div>
        <div class="cut l">${b(ic('power', 11), '', 'low cut')}<input value="30.0Hz" aria-label="Low cut"><i>48</i></div>
        <div class="gain">Gain</div>${b('Phase 0°', 'phase')}</div>
      ${band('1 LO', 'lo', '100.0Hz')}${band('2 LMF', 'mid', '800.0Hz')}${band('3 HMF', 'mid', '2000Hz')}${band('4 HI', 'hi', '12000Hz')}`;
  }
});

customElements.define('out-fader', class extends DawElement {
  css() { return `
    :host { display: flex; flex-direction: column; border: 2px solid #5b5d61; border-radius: 7px; background: #24292c; padding: 7px; color: #c6c7c8; }
    .grid { display: grid; grid-template: 1fr 1fr / 1fr 1fr; gap: 1px; height: 38px; border: 1px solid #111; background: #111; }
    .grid button { background: #303236; }
    .grid .hot { background: #d2d2d2; color: #222; }
    .ltr { font-size: 13px; }
    .pan { display: flex; flex-direction: column; align-items: center; height: 31px; margin: 6px 1px 8px; padding-top: 2px; border: 1px solid #16171a; border-radius: 4px; background: #1e1f21; font-size: 10px; line-height: 12px; color: #eee; }
    .pan i { width: 4px; height: 16px; background: #eee; }
    .fad { display: flex; justify-content: space-between; height: 248px; margin: 0 1px 6px; }
    .fad div { display: grid; width: 49px; border: 1px solid #16171a; border-radius: 4px; background: #1d1e20; }
    .fad svg, .fad input { grid-area: 1 / 1; }
    text { font-size: 9px; font-weight: bold; fill: #a4adb4; }
    .m text { fill: #6e7377; }
    .fad input { appearance: none; writing-mode: vertical-lr; direction: rtl; width: 19px; height: 246px; margin-left: 5px; }
    .fad input::-webkit-slider-thumb { appearance: none; width: 19px; height: 44px; box-shadow: 0 2px 3px #000; background: linear-gradient(#8c1214 6px, #e03033 6px 12px, #b32427 12px 13px, #e03033 13px 17px, #b32427 17px 18px, #d92b2e 18px 21px, #3a1010 21px 23px, #e24a4c 23px 27px, #b32427 27px 28px, #ea5e60 28px 33px, #b32427 33px 34px, #f07072 34px 39px, #7a0f12 39px); }
    .vals { display: flex; height: 19px; margin-bottom: 5px; border: 1px solid #111; font-size: 11px; line-height: 17px; text-align: center; }
    .vals span { flex: 1 1 0; }
    .vals span + span { background: #37383c; border-left: 1px solid #111; }
    .id { display: flex; align-items: center; gap: 9px; height: 27px; padding: 4px 10px 0 4px; font-size: 12px; }
    .id span { margin-left: auto; }
    .nm { display: flex; height: 33px; border-bottom: 5px solid #77787a; background: #e8e8e8; color: #1c1c1c; font-size: 12px; }
    .nm input { width: 85px; padding-left: 4px; }
    .nm button { flex: 1; background: #a6a6a6; }`; }
  html() {
    const L = [[22, '6'], [65, '0'], [103, '5'], [132, '10'], [155, '15'], [172, '20'], [195, '30'], [208, '40'], [215, ''], [224, '00']];
    const R = [[23, '0'], [52, '6'], [82, '12'], [111, '18'], [140, '24'], [165, '30'], [199, '40'], [222, '50']];
    return `<div class="grid ltr">${b('M')}${b('S')}${b('L')}${b(EE, 'hot', 'edit')}</div>
      <div class="pan"><i></i>C</div>
      <div class="fad"><div><svg width="47" height="246"><rect x="13" y="16" width="3" height="216" fill="#08090a"/>
        ${L.map(([y, t]) => `<rect x="18" y="${y}" width="18" height="1" fill="#63676b"/><text x="47" y="${y + 3}" text-anchor="end">${t}</text>`).join('')}</svg>
        <input type="range" value="79" aria-label="Volume"></div>
        <div class="m"><svg width="47" height="246">${R.map(([y, t]) => `<path d="M2 ${y}h14v1H2zM33 ${y}h12v1H33z" fill="#55585b"/><text x="24" y="${y + 3}" text-anchor="middle">${t}</text>`).join('')}
        <path d="M3 233h20v5H3zM24 233h20v5H24z" fill="#25a83f"/></svg></div></div>
      <div class="vals"><span>0.00</span><span>-66.3</span></div>
      <div class="grid ltr">${b('R')}${b('W')}${b('', '', 'none')}${b('', '', 'none')}</div>
      <div class="id">${ic('out', 12)}${ic('stereo', 13)}<span>1</span></div>
      <div class="nm"><input value="Stereo Out" aria-label="Output name">${b(ic('triR', 12), '', 'next')}</div>`;
  }
});

customElements.define('channel-window', class extends DawElement {
  css() { return `
    :host { display: flex; flex-direction: column; position: absolute; left: 965px; top: 461px; width: 1127px; height: 558px; z-index: 5; border: 1px solid #47494c; border-radius: 4px 4px 0 0; background: #080808; }
    .title { display: flex; align-items: center; height: 30px; padding: 0 1px 0 8px; background: #201f1f; font-size: 11px; color: #eee; }
    .title button { width: 19px; height: 19px; background: #c75050; color: #fff; }
    .bar { display: flex; align-items: center; gap: 10px; height: 40px; padding: 0 3px; background: #24292c; font-size: 12px; }
    .bar .out { width: 113px; height: 25px; padding: 0 5px; background: #1a1b1f; border: 1px solid #5a5c5f; border-radius: 3px; margin: 0 1px 0 -5px; }
    .bar .g { font-size: 12px; }
    .bar .off { color: #85878a; }
    .src { margin-left: 162px; }
    .tgt { margin-left: -5px; }
    .src span + span { display: flex; background: #45464a; }
    .pre { align-items: center; padding-left: 4px; margin-left: -5px; }
    .pre input { width: 114px; height: 23px; padding-left: 6px; font-style: italic; border-right: 1px solid #5a5c5f; }
    .pre input::placeholder { color: #9b9da0; }
    main { flex: 1; display: grid; grid-template-columns: 196px minmax(0, 1fr) 195px 122px; gap: 5px; padding: 4px 4px 4px 3px; min-height: 0; }
    .slots { display: flex; flex-direction: column; gap: 6px; padding: 7px 10px 0; }
    .slots i { height: 20px; border: 1px solid #131415; border-radius: 2px; background: #242527; }
    .slots .post { height: 2px; margin: -3px 0 -5px; border: 0; background: repeating-linear-gradient(90deg, #28e028 0 1px, #127012 1px 2px); }
    .eq { padding: 7px 7px 0 6px; }
    .tip { position: absolute; left: 1088px; top: 550px; z-index: 2; padding: 0 3px; height: 20px; background: #ffffe1; border: 1px solid #d8d8c0; color: #222; font-size: 10px; line-height: 18px; white-space: nowrap; }`; }
  html() {
    const slots = Array.from({length: 16}, (_, i) => (i === 14 ? '<i class="post"></i>' : '') + '<i></i>').join('');
    return `<div class="title"><span>Channel Settings : Stereo Out [stereo]</span><span class="sp"></span>${b(ic('xs', 11), '', 'close')}</div>
      <div class="bar"><div class="g n">${ib('left')}${ib('right', 'off')}</div><div class="g n">${ib('up')}${ib('down')}${ib('search')}</div>
        <div class="g dk src">${sel('54 Sources', 123)}<span>${b(ic('tri', 12), '', 'sources')}</span></div>
        <input class="out" value="Stereo Out" aria-label="Channel">${ic('right', 14)}
        <div class="g dk tgt">${sel('No Target', 123)}</div>
        <div class="g"><button class="off" style="width:30px" aria-label="copy">${ic('goto', 18)}</button></div>
        <div class="g dk pre">${ic('preset')}<input placeholder="Track Presets..." aria-label="Track Presets">${b(ic('tri', 12), '', 'presets')}</div>
        <span class="sp"></span><div class="g dk">${b(ic('tri', 12), '', 'functions')}</div></div>
      <main>
        <tab-frame tabs="Inserts,Strip" icons="ring diamond,half" bottom="Inserts,Routing"><div class="slots">${slots}</div></tab-frame>
        <tab-frame tabs="Channel Strip,Equalizer" icons="ring diamond,ring diamond" active="1"><div class="eq"><eq-curve></eq-curve><eq-bands></eq-bands></div></tab-frame>
        <tab-frame tabs="Destinations,Cue Sends" icons="ring,ring"></tab-frame>
        <out-fader></out-fader>
      </main><div class="tip">Stereo Out</div>`;
  }
});

// ---------- application ----------
customElements.define('daw-app', class extends DawElement {
  css() { return `
    :host { display: flex; flex-direction: column; position: relative; min-height: 100vh; background: #080808; }
    .work { flex: 1; display: grid; grid-template-columns: 158px minmax(0, 1fr); gap: 6px; padding: 4px 5px 4px; min-height: 0; }
    .right { display: flex; flex-direction: column; min-width: 0; }
    .project { flex: 1; display: grid; grid-template-columns: 716px 2px minmax(0, 1fr); margin-bottom: 4px; padding: 4px 2px 4px 4px; border: 2px solid #5b5d61; border-radius: 8px; background: #24292c; }
    .split { background: linear-gradient(#6b6d70 355px, transparent 355px 381px, #6b6d70 381px); display: flex; padding-top: 359px; }
    .split i { width: 2px; height: 20px; background: repeating-linear-gradient(#ddd 0 3px, transparent 3px 5px); }`; }
  html() {
    return `<title-bar></title-bar><menu-bar></menu-bar><tool-bar></tool-bar><status-line></status-line><info-line>No Object Selected</info-line>
      <div class="work"><tab-frame tabs="Channel" single></tab-frame>
        <div class="right"><div class="project"><track-list></track-list><div class="split"><i></i></div><arrange-view></arrange-view></div>
          <mix-console></mix-console><lower-tabs></lower-tabs></div></div>
      <transport-bar></transport-bar><channel-window></channel-window>`;
  }
});
</script>
</body>
</html>
